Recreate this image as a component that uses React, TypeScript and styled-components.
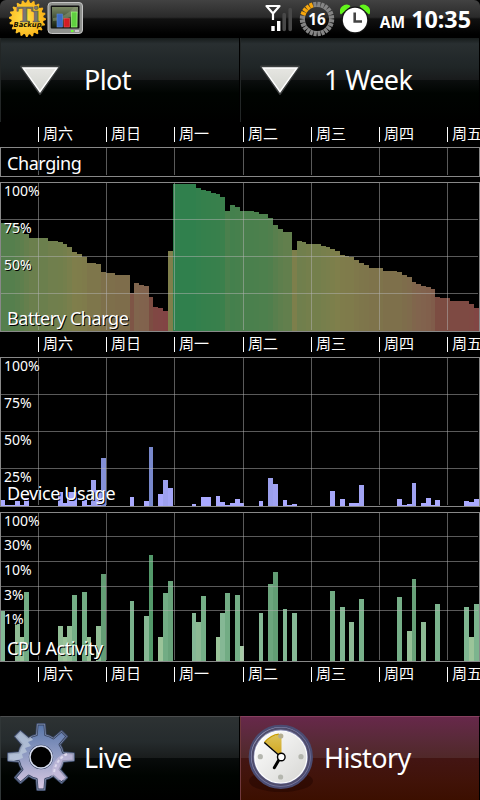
import styled, { createGlobalStyle } from "styled-components"

type Bar = [x: number, width: number, height: number]
type Stop = [level: number, r: number, g: number, b: number]

const DAYS = ["周六", "周日", "周一", "周二", "周三", "周四", "周五"]
const DAY_LINES = [38, 106, 174, 243, 311, 379, 447]

// [x, height], each step runs to the next one
const BATTERY_STEPS: [number, number][] = [
	[1, 108], [15, 105], [20, 102], [24, 97], [29, 93], [48, 90], [58, 89], [63, 87],
	[67, 84], [72, 79], [77, 77], [82, 74], [87, 68], [96, 67], [101, 59], [106, 58],
	[115, 56], [130, 38], [134, 48], [139, 46], [144, 45], [149, 34], [153, 24],
	[158, 23], [163, 20], [168, 80], [173, 147], [196, 143], [201, 141], [206, 140],
	[211, 138], [216, 137], [220, 134], [225, 120], [230, 126], [235, 124], [240, 120],
	[254, 119], [259, 117], [268, 113], [273, 106], [278, 102], [283, 99], [292, 81],
	[297, 90], [302, 89], [306, 87], [321, 85], [326, 84], [330, 82], [335, 80],
	[340, 76], [345, 75], [349, 74], [354, 71], [359, 68], [364, 66], [369, 63],
	[383, 60], [397, 59], [402, 56], [407, 54], [412, 49], [416, 47], [421, 45],
	[426, 44], [431, 42], [435, 34], [440, 33], [450, 30], [469, 27], [474, 23],
]

const BATTERY_BARS: Bar[] = BATTERY_STEPS.map(([x, h], i) => {
	const next = BATTERY_STEPS[i + 1]
	return [x, (next ? next[0] : 479) - x, h]
})

const DEVICE_BARS: Bar[] = [
	[1, 4, 6], [5, 10, 1], [15, 5, 5], [20, 4, 1], [24, 5, 8], [58, 5, 14], [63, 4, 3],
	[67, 10, 14], [82, 5, 6], [87, 4, 1], [91, 5, 26], [96, 5, 16], [101, 5, 48],
	[130, 4, 9], [144, 5, 5], [149, 4, 59], [158, 5, 12], [163, 5, 26], [168, 5, 18],
	[192, 4, 2], [201, 10, 9], [216, 4, 10], [220, 5, 4], [225, 5, 1], [230, 5, 3],
	[235, 5, 7], [240, 4, 3], [259, 4, 5], [268, 5, 28], [273, 5, 22], [283, 4, 6],
	[287, 5, 1], [292, 5, 2], [330, 5, 15], [340, 5, 7], [349, 10, 3], [359, 5, 21],
	[397, 5, 7], [402, 5, 1], [407, 5, 2], [412, 4, 23], [421, 5, 3], [426, 5, 8],
	[431, 4, 1], [435, 5, 6], [464, 5, 5], [469, 5, 4], [474, 5, 7],
]

const CPU_BARS: Bar[] = [
	[1, 4, 50], [15, 5, 37], [20, 4, 24], [24, 5, 69], [58, 5, 35], [63, 4, 24],
	[67, 5, 35], [72, 5, 66], [82, 5, 69], [87, 4, 24], [96, 5, 35], [101, 5, 87],
	[130, 4, 60], [144, 5, 45], [149, 4, 106], [158, 5, 24], [163, 5, 68], [168, 5, 80],
	[192, 4, 48], [196, 5, 39], [201, 5, 65], [216, 4, 24], [220, 5, 48], [225, 5, 68],
	[235, 5, 66], [240, 4, 15], [259, 4, 48], [268, 5, 77], [273, 5, 89], [283, 4, 52],
	[292, 5, 48], [330, 5, 70], [340, 5, 54], [349, 5, 39], [359, 5, 62], [397, 5, 64],
	[407, 5, 30], [412, 4, 82], [421, 5, 39], [435, 5, 57], [464, 5, 54], [469, 5, 24],
	[474, 5, 57],
]

const BATTERY_COLORS: Stop[] = [
	[20, 130, 68, 68], [34, 124, 77, 66], [45, 129, 98, 77], [58, 126, 111, 75],
	[80, 127, 127, 75], [93, 107, 127, 77], [108, 85, 127, 77], [120, 74, 128, 77],
	[137, 56, 128, 76], [147, 48, 128, 77],
]
const DEVICE_COLORS: Stop[] = [[9, 170, 170, 255], [26, 157, 160, 238], [59, 120, 136, 204]]
const CPU_COLORS: Stop[] = [
	[15, 166, 203, 166], [24, 155, 196, 153], [39, 141, 186, 148], [50, 131, 184, 149],
	[66, 116, 174, 134], [87, 100, 157, 117], [106, 83, 153, 106],
]

const colorAt = (stops: Stop[], level: number) => {
	let from = stops[0]
	let to = stops[0]
	for (const stop of stops) {
		to = stop
		if (stop[0] >= level) break
		from = stop
	}
	const span = to[0] - from[0]
	const t = span > 0 ? Math.min(1, Math.max(0, (level - from[0]) / span)) : 0
	const mix = (i: 1 | 2 | 3) => Math.round(from[i] + (to[i] - from[i]) * t)
	return `rgb(${mix(1)}, ${mix(2)}, ${mix(3)})`
}

interface PlotProps {
	title: string
	height: number
	bars?: Bar[]
	colors?: Stop[]
	marks?: { at: number; label: string }[]
	titleTop: number
}

const Plot = ({ title, height, bars = [], colors = [], marks = [], titleTop }: PlotProps) => (
	<PlotPanel $height={height}>
		<svg width="480" height={height} shapeRendering="crispEdges">
			{bars.map(([x, w, h]) => (
				<rect key={x} x={x} y={height - 1 - h} width={w} height={h} fill={colorAt(colors, h)} />
			))}
			<g fill="#b4b4b4" fillOpacity="0.5">
				{DAY_LINES.map((x) => (
					<rect key={x} x={x} y="1" width="1" height={height - 3} />
				))}
				{marks
					.filter((m) => m.at > 0)
					.map((m) => (
						<rect key={m.at} x="1" y={m.at} width="477" height="1" />
					))}
			</g>
			<rect x="0.5" y="0.5" width="479" height={height - 1} fill="none" stroke="#888" />
		</svg>
		{marks
			.filter((m) => m.label)
			.map((m) => (
				<Mark key={m.label} $top={m.at - 1}>
					{m.label}
				</Mark>
			))}
		<PlotTitle $top={titleTop}>{title}</PlotTitle>
	</PlotPanel>
)

const DayAxis = () => (
	<Axis>
		{DAYS.map((day) => (
			<Day key={day}>{day}</Day>
		))}
	</Axis>
)

const Triangle = () => (
	<svg width="44" height="34" viewBox="0 0 44 34">
		<defs>
			<linearGradient id="tri" x1="0" y1="0" x2="0" y2="1">
				<stop offset="0" stopColor="#e6e6e2" />
				<stop offset="1" stopColor="#d2d4ce" />
			</linearGradient>
		</defs>
		<path d="M3 3.5H41L22 31Z" fill="#555" stroke="#3c3f3f" strokeWidth="2" strokeLinejoin="round" />
		<path d="M5 5H39L22 28.7Z" fill="url(#tri)" stroke="#fff" strokeWidth="1.4" />
	</svg>
)

const badgePoints = Array.from({ length: 80 }, (_, i) => {
	const r = i % 4 < 2 ? 18.5 : 16
	const a = (i * Math.PI) / 40
	return `${(18.5 + r * Math.cos(a)).toFixed(1)},${(18.5 + r * Math.sin(a)).toFixed(1)}`
}).join(" ")

const BackupIcon = () => (
	<svg width="37" height="37" viewBox="0 0 37 37">
		<defs>
			<radialGradient id="badge" cx="0.4" cy="0.5" r="0.6">
				<stop offset="0" stopColor="#ffe24a" />
				<stop offset="1" stopColor="#f9ae14" />
			</radialGradient>
		</defs>
		<polygon points={badgePoints} fill="url(#badge)" />
		<text x="19" y="21.5" textAnchor="middle" fontFamily="Liberation Serif, serif" fontWeight="700" fontSize="23" fill="#777" stroke="#665f48" strokeWidth="0.7" textLength="23" lengthAdjust="spacingAndGlyphs">
			Ti
		</text>
		<text x="18.5" y="27" textAnchor="middle" fontFamily="DejaVu Sans, sans-serif" fontWeight="700" fontStyle="italic" fontSize="7" fill="#161000" textLength="28" lengthAdjust="spacingAndGlyphs">
			Backup
		</text>
	</svg>
)

const MonitorIcon = () => (
	<svg width="37" height="34" viewBox="0 0 37 34">
		<defs>
			<linearGradient id="screen" x1="0" y1="0" x2="0" y2="1">
				<stop offset="0" stopColor="#7b8965" />
				<stop offset="0.5" stopColor="#46533a" />
				<stop offset="1" stopColor="#18200f" />
			</linearGradient>
		</defs>
		<rect x="1" y="1.5" width="34.5" height="31" rx="3.5" fill="#8f918e" stroke="#c4c4c4" />
		<rect x="3.7" y="4.5" width="28.8" height="23" rx="1" fill="#111" />
		<rect x="5" y="6" width="26" height="20.5" fill="url(#screen)" />
		<path d="M6 17Q18 17 27 6H31V12Q20 19 6 20Z" fill="#8c9b77" opacity="0.5" />
		<rect x="10" y="13" width="5.5" height="13" fill="#3c6bc4" stroke="#5c88dc" strokeWidth="0.6" />
		<rect x="17" y="17.5" width="5.5" height="8.5" fill="#d21c24" stroke="#f05050" strokeWidth="0.6" />
		<rect x="24.5" y="11" width="5.5" height="15" fill="#60d040" stroke="#a0ff80" strokeWidth="0.7" />
		<rect x="24" y="29" width="2.5" height="2" fill="#6cff32" />
		<rect x="28" y="29" width="4" height="2" fill="#c8c8c8" />
	</svg>
)

const SignalIcon = () => (
	<svg width="28" height="28" viewBox="0 0 28 28">
		<path d="M1.5 2H14.5L8 9.5ZM8 9V16" fill="none" stroke="#fff" strokeWidth="2.2" strokeLinejoin="round" />
		<path d="M8 22V27M13.7 17V27" stroke="#fff" strokeWidth="3.4" />
		<path d="M19.2 10.5V25.5M25.2 5.5V25.5" stroke="#484848" strokeWidth="3.6" strokeLinecap="round" />
	</svg>
)

const BatteryRing = () => (
	<svg width="36" height="36" viewBox="0 0 36 36">
		{Array.from({ length: 24 }, (_, i) => (
			<path
				key={i}
				d="M18 .8V6"
				stroke={i >= 19 && i < 23 ? "#f7a70c" : "#858585"}
				strokeWidth="3.2"
				transform={`rotate(${i * 15 + 7} 18 18)`}
			/>
		))}
		<text x="18" y="24" textAnchor="middle" fontFamily="Noto Sans, sans-serif" fontWeight="700" fontSize="16" fill="#fff" textLength="17.5" lengthAdjust="spacingAndGlyphs">
			16
		</text>
	</svg>
)

const AlarmIcon = () => (
	<svg width="30" height="30" viewBox="0 0 30 30">
		<path d="M1 9.5A6 6 0 0 1 9.5 2.2ZM29 9.5A6 6 0 0 0 20.5 2.2Z" fill="#62f51b" stroke="#62f51b" strokeWidth="1.5" strokeLinejoin="round" />
		<circle cx="15" cy="16" r="13.5" fill="#151515" />
		<circle cx="15" cy="16" r="12.2" fill="#fff" />
		<path d="M14.7 8.5V17.5H22" fill="none" stroke="#444" strokeWidth="2.6" />
	</svg>
)

const gearPath = () => {
	const points: string[] = []
	for (let i = 0; i < 8; i++) {
		const mid = (i * Math.PI) / 4
		const corners = [[22.5, -0.2], [33, -0.11], [33, 0.11], [22.5, 0.2], [22.5, 0.39]]
		for (const [r, d] of corners) {
			points.push(`${(36 + r * Math.sin(mid + d)).toFixed(1)} ${(36 - r * Math.cos(mid + d)).toFixed(1)}`)
		}
	}
	return `M${points.join("L")}ZM47 36A11 11 0 1 0 25 36A11 11 0 1 0 47 36Z`
}

const GearIcon = () => (
	<svg width="72" height="72" viewBox="0 0 72 72">
		<defs>
			<linearGradient id="gear" x1="0" y1="0" x2="0" y2="1">
				<stop offset="0" stopColor="#5775a8" />
				<stop offset="0.5" stopColor="#949ec5" />
				<stop offset="1" stopColor="#ddcbe4" />
			</linearGradient>
			<clipPath id="gearClip">
				<path d={gearPath()} clipRule="evenodd" />
			</clipPath>
		</defs>
		<path d={gearPath()} fill="url(#gear)" fillRule="evenodd" stroke="#34415f" strokeWidth="2.4" strokeLinejoin="round" />
		<g clipPath="url(#gearClip)">
			<path d="M0 0H29L25 15L28 19L23 21L26 25L20 27L22 31L17 33L18 37L0 43Z" fill="#becbdc" opacity="0.75" />
			<path d="M72 32H60A22 22 0 0 0 47 49L46 59H62L72 50Z" fill="#c7bddb" opacity="0.65" />
			<path d="M62 33A23 23 0 0 0 49 53" fill="none" stroke="#dcd9ed" strokeWidth="2" strokeDasharray="3 2" />
		</g>
		<path d={gearPath()} fill="none" stroke="#b9c6df" strokeWidth="0.7" opacity="0.7" />
		<circle cx="36" cy="36" r="11" fill="#000" stroke="#d6dcf0" strokeWidth="1.5" />
	</svg>
)

const ClockIcon = () => (
	<svg width="72" height="72" viewBox="0 0 72 72">
		<defs>
			<linearGradient id="rim" x1="0" y1="0" x2="1" y2="1">
				<stop offset="0" stopColor="#aeb3d0" />
				<stop offset="0.5" stopColor="#72749e" />
				<stop offset="1" stopColor="#8080a6" />
			</linearGradient>
			<linearGradient id="face" x1="0" y1="0" x2="1" y2="1">
				<stop offset="0" stopColor="#fff" />
				<stop offset="1" stopColor="#d6d6d3" />
			</linearGradient>
			<linearGradient id="wedge" x1="0" y1="0" x2="0" y2="1">
				<stop offset="0" stopColor="#dcc35a" />
				<stop offset="1" stopColor="#d1a51c" />
			</linearGradient>
		</defs>
		<ellipse cx="36" cy="60" rx="32" ry="11" fill="#200500" opacity="0.45" />
		<circle cx="35.8" cy="35.8" r="31" fill="url(#rim)" stroke="#4b4c72" strokeWidth="2.2" />
		<circle cx="35.8" cy="35.8" r="28.2" fill="none" stroke="#4f4c6b" strokeWidth="2" />
		<circle cx="35.8" cy="36" r="26" fill="url(#face)" stroke="#fff" strokeWidth="1.2" />
		<g fill="#b4b6ae">
			<circle cx="15.3" cy="35.7" r="2.6" />
			<circle cx="56" cy="35.7" r="2.6" />
			<circle cx="35.6" cy="56" r="2.6" />
		</g>
		<path d="M36.5 35.5L19.5 21.5Q26 14 36.5 13.2Z" fill="url(#wedge)" />
		<path d="M19.5 21.5Q26 14 34 13.2" fill="none" stroke="#c89c00" strokeWidth="1.2" />
		<circle cx="35.8" cy="15" r="2.6" fill="#b3ad91" />
		<path d="M36 36L19.3 21.5" stroke="#000" strokeWidth="1.4" />
		<path d="M35 37L29.3 46.7" stroke="#000" strokeWidth="3" strokeLinecap="round" />
		<circle cx="36.3" cy="36" r="3.8" fill="#fff" stroke="#000" strokeWidth="1.4" />
	</svg>
)

const App = () => (
	<Screen>
		<GlobalStyle />
		<StatusBar>
			<Notifications>
				<BackupIcon />
				<MonitorIcon />
			</Notifications>
			<StatusIcons>
				<SignalIcon />
				<BatteryRing />
				<AlarmIcon />
			</StatusIcons>
			<Clock>
				<Meridiem>AM</Meridiem>
				<Time>10:35</Time>
			</Clock>
		</StatusBar>
		<ButtonRow>
			<DropButton>
				<Triangle />
				<ButtonText>Plot</ButtonText>
			</DropButton>
			<DropButton>
				<Triangle />
				<ButtonText>1 Week</ButtonText>
			</DropButton>
		</ButtonRow>
		<DayAxis />
		<Plot title="Charging" height={30} titleTop={4} />
		<Gap />
		<Plot
			title="Battery Charge"
			height={150}
			titleTop={124}
			bars={BATTERY_BARS}
			colors={BATTERY_COLORS}
			marks={[
				{ at: 0, label: "100%" },
				{ at: 37, label: "75%" },
				{ at: 74, label: "50%" },
				{ at: 111, label: "" },
			]}
		/>
		<DayAxis />
		<Plot
			title="Device Usage"
			height={150}
			titleTop={124}
			bars={DEVICE_BARS}
			colors={DEVICE_COLORS}
			marks={[
				{ at: 0, label: "100%" },
				{ at: 37, label: "75%" },
				{ at: 74, label: "50%" },
				{ at: 111, label: "25%" },
			]}
		/>
		<Gap />
		<Plot
			title="CPU Activity"
			height={150}
			titleTop={124}
			bars={CPU_BARS}
			colors={CPU_COLORS}
			marks={[
				{ at: 0, label: "100%" },
				{ at: 24, label: "30%" },
				{ at: 49, label: "10%" },
				{ at: 74, label: "3%" },
				{ at: 98, label: "1%" },
			]}
		/>
		<DayAxis />
		<TabRow>
			<Tab>
				<GearIcon />
				<ButtonText>Live</ButtonText>
			</Tab>
			<Tab $active>
				<ClockIcon />
				<ButtonText>History</ButtonText>
			</Tab>
		</TabRow>
	</Screen>
)

export default App

const GlobalStyle = createGlobalStyle`
	body {
		margin: 0;
		background: #000;
	}

	* {
		box-sizing: border-box;
	}

	svg {
		display: block;
		flex: none;
	}
`

const Screen = styled.div`
	width: 480px;
	height: 800px;
	display: flex;
	flex-direction: column;
	overflow: hidden;
	background: #000;
	color: #fff;
	font-family: "Noto Sans", "Noto Sans CJK SC", sans-serif;
`

const StatusBar = styled.header`
	height: 38px;
	flex: none;
	display: flex;
	align-items: flex-start;
	padding: 0 9px 0 9px;
	border-radius: 6px 6px 0 0;
	background: linear-gradient(#424242, #2a2a2a 45%, #111 50%, #000 90%);
`

const Notifications = styled.div`
	display: flex;
	gap: 1px;

	svg:last-child {
		margin-top: 1px;
	}
`

const StatusIcons = styled.div`
	display: flex;
	align-items: flex-start;
	margin-left: auto;
	gap: 5px;

	svg:nth-child(1) {
		margin-top: 4px;
	}
	svg:nth-child(2) {
		margin-top: 1px;
		margin-left: 1px;
	}
	svg:nth-child(3) {
		margin-top: 4px;
	}
`

const Clock = styled.div`
	display: flex;
	align-items: baseline;
	gap: 6px;
	margin-left: 10px;
	line-height: 38px;
	font-weight: 700;
`

const Meridiem = styled.span`
	font-size: 15.5px;
`

const Time = styled.span`
	font-size: 23.3px;
`

const ButtonRow = styled.div`
	height: 84px;
	flex: none;
	display: grid;
	grid-template-columns: 1fr 1fr;
`

const DropButton = styled.div`
	display: flex;
	align-items: center;
	padding-left: 17px;
	gap: 22px;
	border-left: 1px solid #222626;
	border-right: 1px solid #000;
	background: linear-gradient(#171c1c, #292f31 7%, #1f2526 35%, #191b1c 49.5%, #0b0e0e 50%, #000401 66%, #000 100%);
`

const ButtonText = styled.span`
	font-size: 27px;
	line-height: 36px;
	letter-spacing: -0.6px;
`

const Axis = styled.div`
	height: 25px;
	flex: none;
	display: grid;
	grid-template-columns: 68px 68px 69px 68px 68px 68px 33px;
	align-items: center;
	padding-left: 38px;
	overflow: hidden;
`

const Day = styled.span`
	height: 15px;
	padding-left: 4px;
	border-left: 1px solid #fff;
	font-family: "Noto Sans CJK SC", sans-serif;
	font-size: 15px;
	line-height: 12px;
	white-space: nowrap;
`

const PlotPanel = styled.section<{ $height: number }>`
	position: relative;
	height: ${({ $height }) => $height}px;
	flex: none;
`

const Mark = styled.span<{ $top: number }>`
	position: absolute;
	left: 4px;
	top: ${({ $top }) => $top}px;
	font-size: 14px;
	line-height: 20px;
	text-shadow: 1px 1px 0 #000;
`

const PlotTitle = styled.span<{ $top: number }>`
	position: absolute;
	left: 7px;
	top: ${({ $top }) => $top}px;
	font-size: 18px;
	line-height: 25px;
	letter-spacing: -0.42px;
	white-space: nowrap;
	text-shadow: 1px 1px 0 #000;
`

const Gap = styled.div`
	height: 5px;
	flex: none;
`

const TabRow = styled.nav`
	height: 84px;
	flex: none;
	margin-top: auto;
	display: grid;
	grid-template-columns: 1fr 1fr;
`

const Tab = styled.div<{ $active?: boolean }>`
	display: flex;
	align-items: center;
	padding: 0 0 2px 4px;
	gap: 7px;
	border-top: 1px solid ${({ $active }) => ($active ? "#86405f" : "#4b4d4e")};
	border-left: 1px solid ${({ $active }) => ($active ? "#70383c" : "#303637")};
	border-right: 1px solid #000;
	background: ${({ $active }) =>
		$active
			? "linear-gradient(#67284a, #5a2a3a 25%, #502828 49.5%, #431513 50%, #411309 75%, #3c0f00)"
			: "linear-gradient(#2d3233, #252b2d 30%, #191c1c 49.5%, #080b0b 50%, #000401 70%, #000)"};

	svg {
		margin-bottom: 2px;
	}
`
